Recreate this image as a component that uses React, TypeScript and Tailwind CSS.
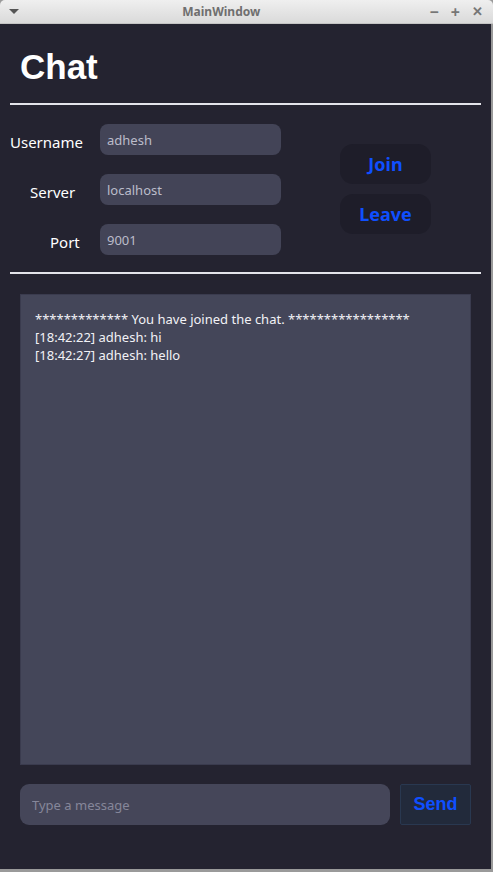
import React, { useState } from 'react';

const noto = { fontFamily: '"Noto Sans", "Open Sans", sans-serif' };

export default function App() {
  const [username, setUsername] = useState('adhesh');
  const [server, setServer] = useState('localhost');
  const [port, setPort] = useState('9001');
  const [message, setMessage] = useState('');

  const log = [
    '************* You have joined the chat. *****************',
    '[18:42:22] adhesh: hi',
    '[18:42:27] adhesh: hello',
  ];

  return (
    <div className="w-[493px] h-[872px] flex flex-col bg-[#9a9a9a] overflow-hidden" style={noto}>
      {/* Title bar */}
      <div className="h-6 shrink-0 flex items-center pl-2 pr-[10px] rounded-t-[5px] bg-gradient-to-b from-[#efefef] to-[#dadada] border-b border-[#c4c4c4]">
        <div className="w-[10px] ml-[1px] flex justify-center">
          <div className="w-0 h-0 border-l-[5px] border-r-[5px] border-t-[5px] border-l-transparent border-r-transparent border-t-[#555]" />
        </div>
        <div className="flex-1 text-center text-[12px] font-bold text-[#6f6f6f] pr-[6px]" style={noto}>
          MainWindow
        </div>
        <div className="flex items-center gap-[12px] text-[#767676] text-[16px] font-bold leading-none">
          <span>−</span>
          <span>+</span>
          <span className="text-[13px]">✕</span>
        </div>
      </div>

      {/* Window body */}
      <div className="flex-1 flex flex-col bg-[#242330] mr-[2px] mb-[3px] px-[10px]">
        <h1
          className="pl-[10px] pt-[23px] pb-[16px] text-[35px] font-bold text-white leading-[40px]"
          style={{ fontFamily: '"Liberation Sans", Arial, sans-serif' }}
        >
          Chat
        </h1>
        <div className="h-[2px] bg-[#e4e4ea]" />

        {/* Connection form */}
        <div className="flex items-start pt-[19px] pb-[17px]">
          <div className="flex flex-col gap-[19px] text-[15px] text-white">
            {[
              { label: 'Username', pad: 'pl-0', value: username, set: setUsername },
              { label: 'Server', pad: 'pl-[20px]', value: server, set: setServer },
              { label: 'Port', pad: 'pl-[40px]', value: port, set: setPort },
            ].map((f) => (
              <div key={f.label} className="flex items-center h-[31px]">
                <span className={`w-[90px] pt-[5px] ${f.pad}`}>{f.label}</span>
                <input
                  value={f.value}
                  onChange={(e) => f.set(e.target.value)}
                  className="w-[181px] h-[31px] rounded-[8px] bg-[#434457] px-[7px] text-[13px] text-[#bbbcca] outline-none"
                  style={noto}
                />
              </div>
            ))}
          </div>
          <div className="ml-[59px] mt-[20px] flex flex-col gap-[10px]">
            <button className="w-[91px] h-[40px] rounded-[13px] bg-[#1e1d29] text-[#0f4fff] text-[18px] font-bold" style={noto}>
              Join
            </button>
            <button className="w-[91px] h-[40px] rounded-[13px] bg-[#1e1d29] text-[#0f4fff] text-[18px] font-bold" style={noto}>
              Leave
            </button>
          </div>
        </div>
        <div className="h-[2px] bg-[#e4e4ea]" />

        {/* Chat log */}
        <div className="mx-[10px] mt-[20px] h-[471px] bg-[#444659] border border-[#3a3b4e] px-[14px] py-[15px] text-[13px] leading-[18px] text-[#f2f2f6]">
          {log.map((l, i) => (
            <div key={i}>{l}</div>
          ))}
        </div>

        {/* Message bar */}
        <div className="flex items-center gap-[10px] mx-[10px] mt-[19px]">
          <input
            value={message}
            onChange={(e) => setMessage(e.target.value)}
            placeholder="Type a message"
            className="flex-1 h-[41px] rounded-[9px] bg-[#454659] px-[12px] text-[13px] text-[#e0e0e8] placeholder:text-[#85869a] outline-none"
            style={noto}
          />
          <button
            className="w-[71px] h-[41px] bg-[#222a3b] border border-[#293850] rounded-[2px] text-[#0f4fff] text-[18px] font-bold"
            style={{ fontFamily: '"Liberation Sans", Arial, sans-serif' }}
          >
            Send
          </button>
        </div>
      </div>
    </div>
  );
}
